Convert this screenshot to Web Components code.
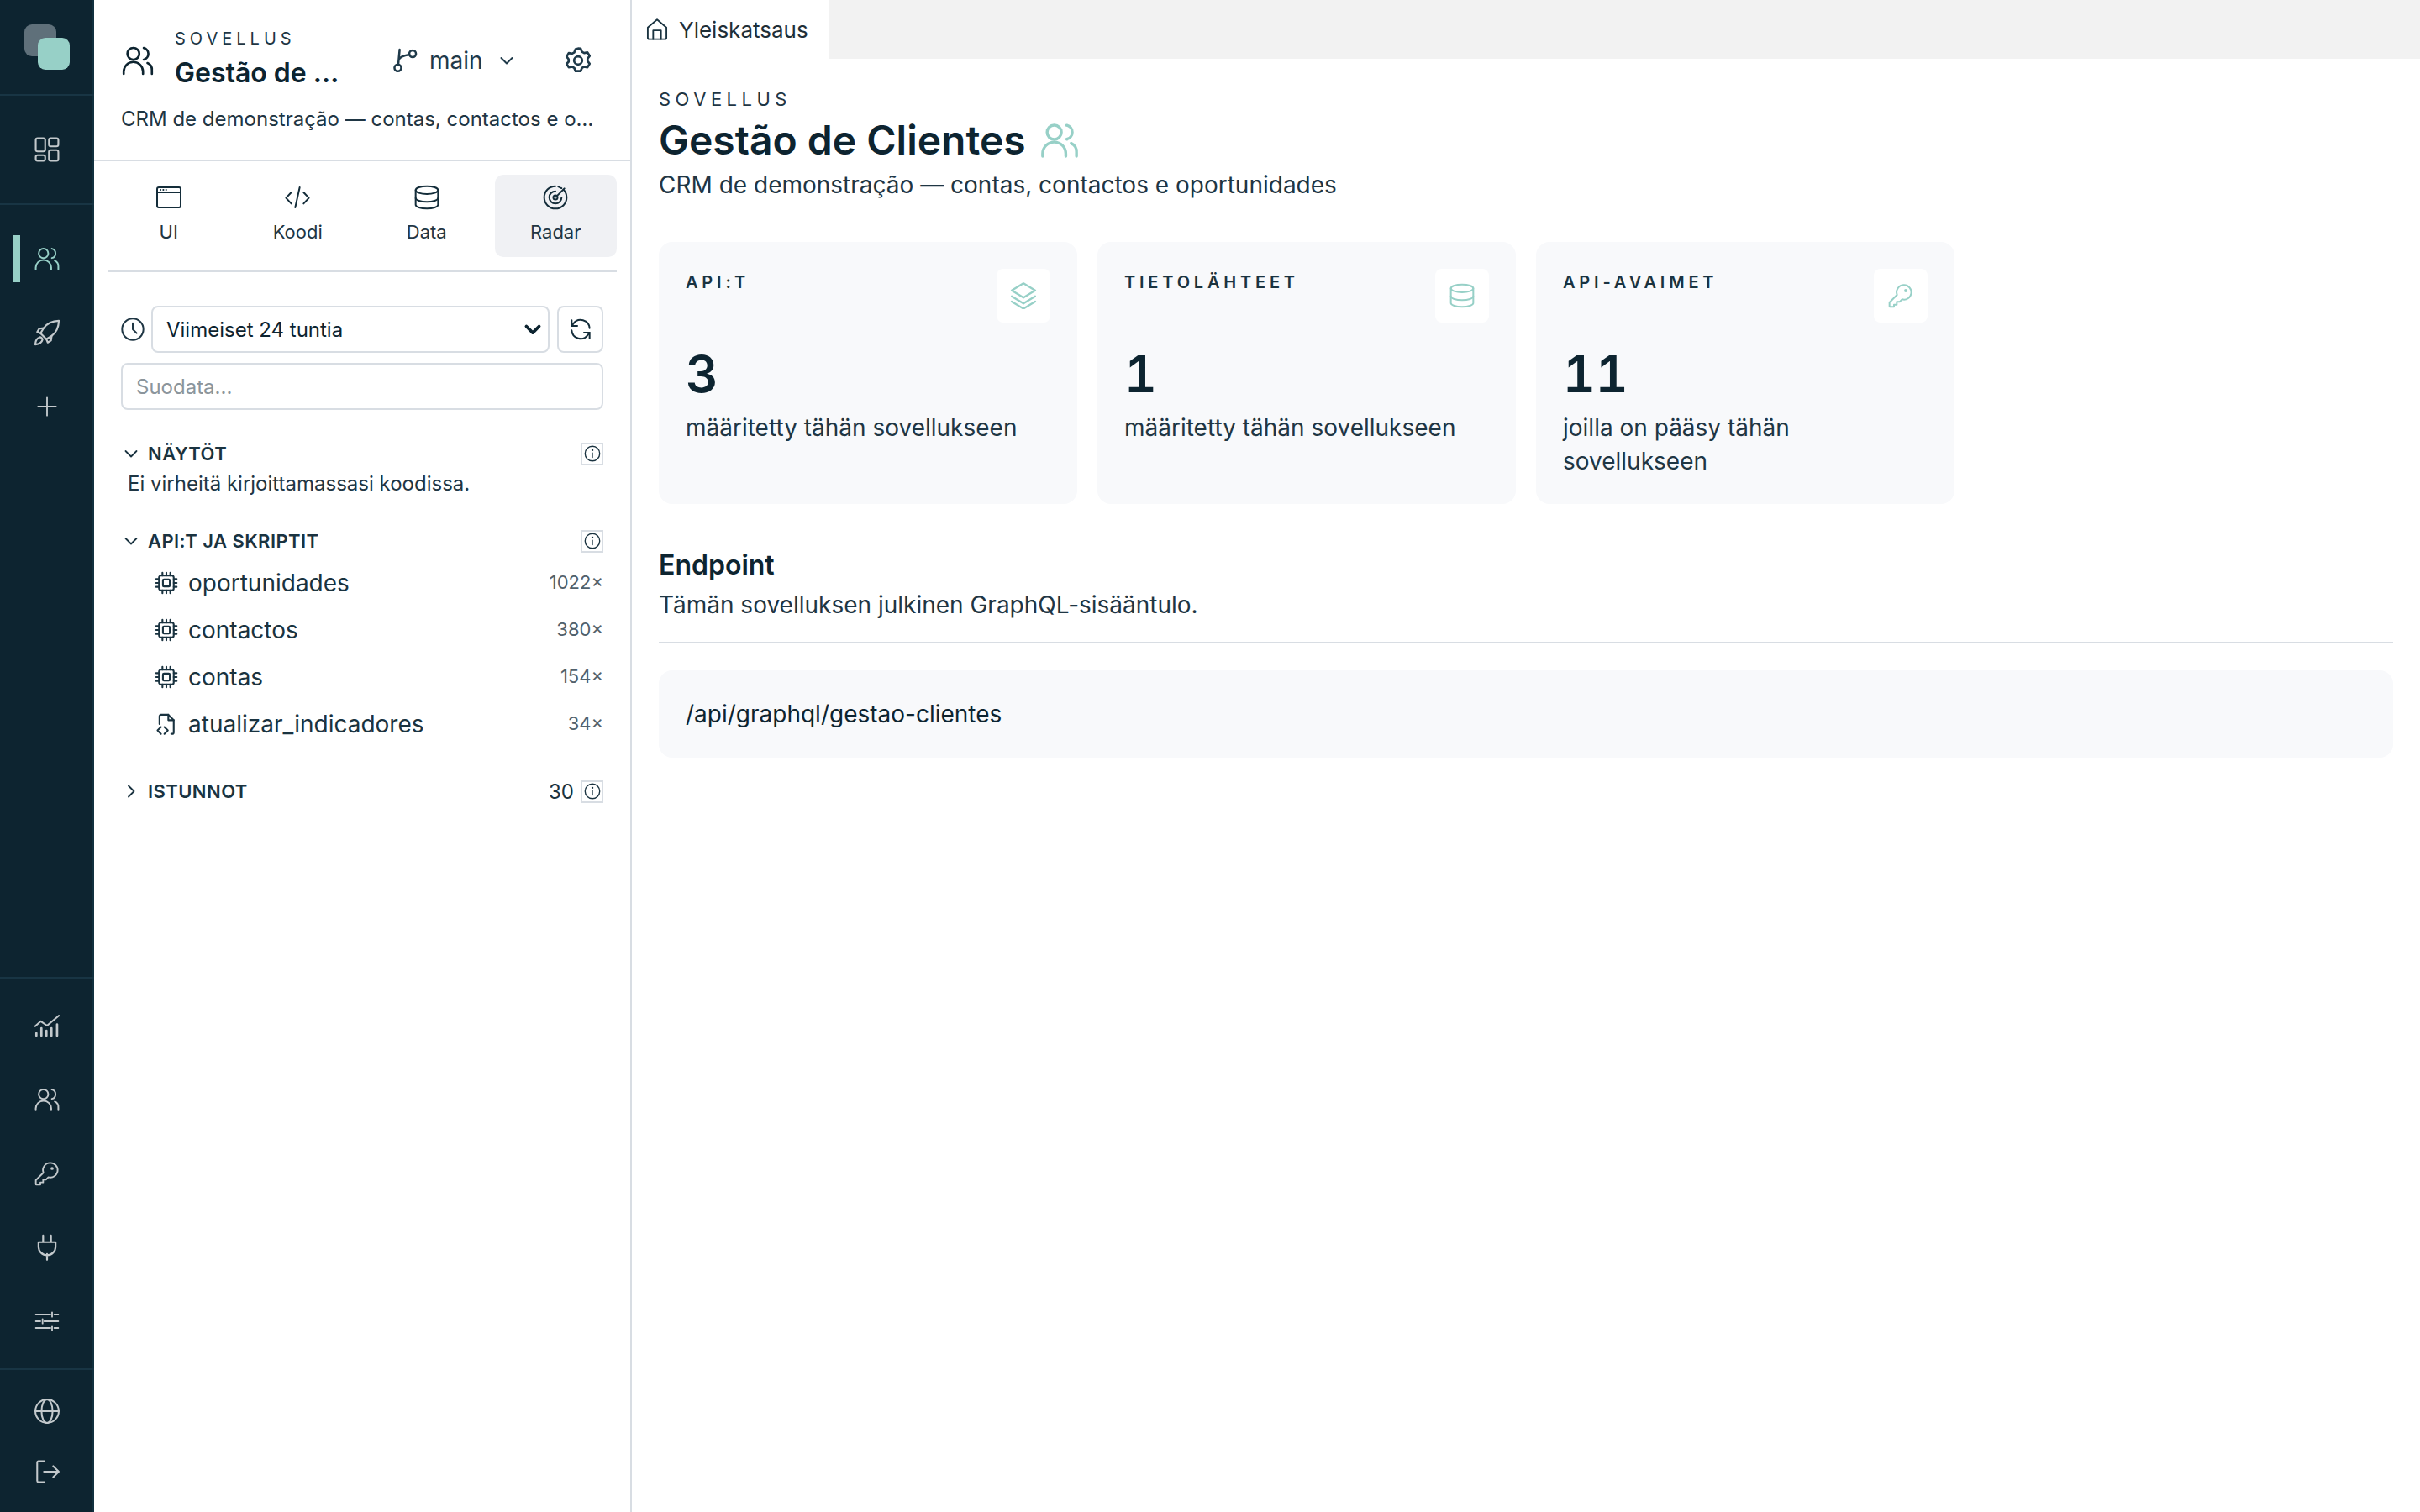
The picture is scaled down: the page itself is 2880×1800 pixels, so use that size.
<!DOCTYPE html>
<html lang="fi"><head><meta charset="utf-8"><title>Gestão de Clientes</title>
<style>
html,body{margin:0;height:100%;background:#fff}
body{font-family:Inter,"Noto Sans",sans-serif;color:#0d2430;overflow:hidden}
</style></head>
<body>
<app-shell>
  <app-rail slot="rail"></app-rail>
  <side-panel slot="panel"></side-panel>
  <main-view slot="main"></main-view>
</app-shell>
<script>
const S=(k,p)=>`<g transform="translate(12 12) scale(${k}) translate(-12 -12)">${p}</g>`;
const ICONS={
users:S(1.06,'<circle cx="9" cy="7.5" r="4"/><path d="M16 3.600a4 4 0 0 1 0 7.800"/><path d="M2.500 21v-1.500A6.500 6.500 0 0 1 9 13h0a6.500 6.500 0 0 1 6.500 6.500V21"/><path d="M18.500 13.700a5 5 0 0 1 3 5V21"/>'),
dash:S(1.12,'<rect x="3" y="3" width="7.500" height="10.500" rx="1.500"/><rect x="13.500" y="3" width="7.500" height="6.500" rx="1.500"/><rect x="3" y="16.500" width="7.500" height="4.500" rx="1.500"/><rect x="13.500" y="12.500" width="7.500" height="8.500" rx="1.500"/>'),
rocket:S(1.17,'<path d="M21 3c-5 .2-9 2-11.500 5.500L7 12.500l4.500 4.500 4-2.500C19 12 20.800 8 21 3z"/><path d="M9.500 8.500 6 9 4.500 11.500 7 12.500"/><path d="M15.500 14.500 15 18l-2.500 1.500-1-2.500"/><path d="M6.500 15.500c-2 .5-3.300 2.500-3.500 5.500 3-.2 5-1.500 5.500-3.500a2 2 0 0 0-2-2z"/>'),
plus:'<path d="M12 4v16M4 12h16"/>',
chart:S(1.12,'<path d="M2.500 12.500 7 8.500l5 3.500 9.500-8"/><path d="M3.500 20v-2M7.500 20v-6M11.500 20v-4M15.500 20v-6M20 20v-9" stroke-width="1.800"/>'),
key:'<path d="M15 2.500a6.500 6.500 0 1 1-1.800 12.750L11 17.500H8.500V20H6v2H2.500a.5.5 0 0 1-.5-.5V18l6.750-6.750A6.500 6.500 0 0 1 15 2.500z"/><circle cx="16.500" cy="7.500" r=".7" fill="currentColor"/>',
plug:S(1.17,'<path d="M9 3v5M15 3v5M5.500 8h13v3.500a5.500 5.500 0 0 1-13 0zM12 17v4.500"/>'),
sliders:'<path d="M2 6h13M18.500 6H22M2 12h4M9.500 12H22M2 18h13M18.500 18H22"/><path d="M16.500 4v4M8 10v4M16.500 16v4"/>',
globe:S(1.1,'<circle cx="12" cy="12" r="9.500"/><ellipse cx="12" cy="12" rx="4.500" ry="9.500"/><path d="M2.500 12h19"/>'),
logout:S(1.1,'<path d="M10 3.500H5a1 1 0 0 0-1 1v15a1 1 0 0 0 1 1h5"/><path d="M9.500 12h12M17 7.500l4.500 4.500-4.500 4.500"/>'),
branch:'<circle cx="5.600" cy="18.500" r="3"/><circle cx="18.800" cy="6" r="3"/><path d="M7.200 2.300 6 15.500M6.400 11.500c.7-2.700 4-3.700 9.500-4.700"/>',
down:'<path d="m5.500 9 6.500 6.500L18.500 9"/>',
right:'<path d="m9 5.500 6.500 6.500L9 18.500"/>',
gear:S(1.13,'<path d="M12 2.500l2 .1 1 2.500 1.800 1 2.600-.5 1.700 2.800-1.600 2.100v2l1.600 2.100-1.700 2.800-2.600-.5-1.800 1-1 2.500h-4l-1-2.500-1.800-1-2.600.5-1.700-2.800L4.500 13v-2L2.900 8.900l1.700-2.800 2.600.5 1.800-1 1-2.500z"/><circle cx="12" cy="12" r="3.200"/>'),
browser:'<rect x="1.500" y="3" width="21" height="18" rx="1.500"/><path d="M1.500 7.500h21"/><path d="M4.500 5.300h.1M7 5.300h.1M9.500 5.300h.1"/>',
code:'<path d="M6.500 7.500 1.800 12.500l4.700 5M17.500 7.500l4.700 5-4.700 5M14 3 10 21"/>',
db:'<ellipse cx="12" cy="5.500" rx="10" ry="3.500"/><path d="M2 5.500v13c0 1.900 4.500 3.500 10 3.500s10-1.600 10-3.500v-13"/><path d="M2 12.500c0 1.900 4.500 3.500 10 3.500s10-1.600 10-3.500"/>',
radar:'<path d="M12 2a10 10 0 1 0 10 10c0-2.500-1-5-2.800-7"/><path d="M12 6.500a5.500 5.500 0 1 0 5.500 5.500"/><path d="M14.500 2.400l3 1.400" stroke-dasharray="1.200 1.500"/><path d="M20 4 12.500 11.500"/><circle cx="12" cy="12" r="1.900"/>',
clock:'<circle cx="12" cy="12" r="9.500"/><path d="M12 6.500V12l3.500 3.500"/>',
refresh:'<path d="M20 11A8 8 0 0 0 5.500 7L4 9M4 13a8 8 0 0 0 14.500 4l1.500-2"/><path d="M4 4v5h5M20 20v-5h-5"/>',
info:'<circle cx="12" cy="12" r="9.500"/><path d="M12 11v6"/><path d="M12 7.500h.1" stroke-width="2.500"/>',
chip:'<rect x="4.500" y="4.500" width="15" height="15" rx="2"/><rect x="8.500" y="8.500" width="7" height="7" rx="1"/><path d="M8 1.500v3M12 1.500v3M16 1.500v3M8 19.500v3M12 19.500v3M16 19.500v3M1.500 8h3M1.500 12h3M1.500 16h3M19.500 8h3M19.500 12h3M19.500 16h3"/>',
file:'<path d="M5 12V4a1.500 1.500 0 0 1 1.500-1.500H14l5.500 5.500v12.500A1.500 1.500 0 0 1 18 22h-1"/><path d="M14 2.500V8h5.500"/><path d="m6.500 15-3.500 3.500L6.500 22M10 15l3.500 3.500L10 22"/>',
home:'<path d="M2.500 10 12 2 21.500 10v10.500a1.500 1.500 0 0 1-1.500 1.500H4a1.500 1.500 0 0 1-1.500-1.500z"/><path d="M8 22v-9h8v9"/>',
layers:S(1.16,'<path d="M12 2.500 21 8l-9 5.500L3 8z"/><path d="m3 12.500 9 5.500 9-5.500"/><path d="m3 16.500 9 5.500 9-5.500"/>')
};
class AppIcon extends HTMLElement{
  connectedCallback(){
    if(this.shadowRoot)return;
    const s=this.getAttribute('size')||28,w=this.getAttribute('sw')||1.5;
    this.attachShadow({mode:'open'}).innerHTML=`<style>:host{display:inline-flex;flex:none;width:${s}px;height:${s}px}svg{display:block;width:100%;height:100%;fill:none;stroke:currentColor;stroke-linecap:round;stroke-linejoin:round}</style><svg viewBox="0 0 24 24" stroke-width="${w}">${ICONS[this.getAttribute('name')]||''}</svg>`;
  }
}
customElements.define('app-icon',AppIcon);

function def(tag,html){
  customElements.define(tag,class extends HTMLElement{
    constructor(){super();this.attachShadow({mode:'open'}).innerHTML=typeof html==='function'?'':html;}
    connectedCallback(){ if(typeof html==='function')this.shadowRoot.innerHTML=html(this); }
  });
}

def('app-shell',`<style>:host{display:flex;width:100%;height:100vh}
.r{flex:none;width:112px}.p{flex:none;width:640px}.m{flex:1;min-width:0}</style>
<div class="r"><slot name="rail"></slot></div><div class="p"><slot name="panel"></slot></div><div class="m"><slot name="main"></slot></div>`);

def('rail-item',h=>`<style>:host{display:flex;align-items:center;justify-content:center;height:${h.getAttribute('h')||88}px;color:${h.hasAttribute('active')?'#97d0c7':'#c3c9cc'};position:relative}
.bar{position:absolute;left:16px;top:16px;width:8px;height:56px;background:#97d0c7}</style>
${h.hasAttribute('active')?'<span class="bar"></span>':''}<app-icon name="${h.getAttribute('icon')}" size="${h.getAttribute('size')||32}" sw="1.400"></app-icon>`);

def('app-rail',`<style>:host{display:flex;flex-direction:column;height:100vh;background:#0d2430;box-shadow:inset -2px 0 0 #11303e;box-sizing:border-box;width:112px}
.logo{height:112px;flex:none;border-bottom:2px solid #183544;position:relative}
.a,.b{position:absolute;width:38px;height:38px;border-radius:9px}
.a{left:29px;top:29px;background:#5f707a}.b{left:45px;top:45px;background:#97d0c7}
.dash{height:128px;flex:none;border-bottom:2px solid #183544;display:flex;flex-direction:column;justify-content:center}
.nav{flex:1;padding-top:20px}
.bot{flex:none;border-top:2px solid #183544;padding:12px 0}
.end{flex:none;border-top:2px solid #183544;padding:13px 0 12px}
</style>
<div class="logo"><span class="a"></span><span class="b"></span></div>
<div class="dash"><rail-item icon="dash"></rail-item></div>
<div class="nav"><rail-item icon="users" active></rail-item><rail-item icon="rocket"></rail-item><rail-item icon="plus"></rail-item></div>
<div class="bot"><rail-item icon="chart"></rail-item><rail-item icon="users"></rail-item><rail-item icon="key"></rail-item><rail-item icon="plug"></rail-item><rail-item icon="sliders"></rail-item></div>
<div class="end"><rail-item icon="globe" h="72"></rail-item><rail-item icon="logout" h="72"></rail-item></div>`);

def('panel-head',`<style>:host{display:block;padding:28px 32px 30px;border-bottom:2px solid #d8dde3;height:132px}
.row{display:flex;align-items:center;height:88px}
.ti{width:206px;margin-left:24px;min-width:0}
.eb{font-size:20px;line-height:24px;letter-spacing:.25em;color:#1f3644;margin-bottom:9px;margin-top:-3px}
.nm{font-size:32px;line-height:40px;font-weight:600;white-space:nowrap;overflow:hidden;text-overflow:ellipsis}
.br{display:flex;align-items:center;margin-left:52px;color:#1f3a4a;font-size:28px;gap:13px}
.br span{margin-top:-1px}
.ch{margin-left:3px}
.g{margin-left:57px;color:#1f3a4a}
.d{font-size:24px;line-height:36px;height:36px;margin-top:8px;white-space:nowrap;overflow:hidden;text-overflow:ellipsis;color:#1f3644;width:566px}
</style>
<div class="row"><app-icon name="users" size="40" sw="1.500"></app-icon>
<div class="ti"><div class="eb">SOVELLUS</div><div class="nm">Gestão de Clientes</div></div>
<div class="br"><app-icon name="branch" size="32" sw="1.900"></app-icon><span>main</span><app-icon class="ch" name="down" size="24" sw="2"></app-icon></div>
<app-icon class="g" name="gear" size="32" sw="1.800"></app-icon></div>
<div class="d">CRM de demonstração — contas, contactos e oportunidades</div>`);

def('tool-tab',h=>`<style>:host{display:flex;flex:1;flex-direction:column;align-items:center;justify-content:center;height:98px;border-radius:10px;font-size:22px;line-height:32px;color:#1f3644;background:${h.hasAttribute('active')?'#f0f1f4':'transparent'}}
app-icon{margin-top:-3px;color:#142d3a}
span{margin-top:9px}</style><app-icon name="${h.getAttribute('icon')}" size="32" sw="1.500"></app-icon><span><slot></slot></span>`);

def('tool-tabs',`<style>:host{display:flex;gap:8px;margin:0 16px;padding:16px 0;border-bottom:2px solid #d8dde3}</style>
<tool-tab icon="browser">UI</tool-tab><tool-tab icon="code">Koodi</tool-tab><tool-tab icon="db">Data</tool-tab><tool-tab icon="radar" active>Radar</tool-tab>`);

def('radar-filter',`<style>:host{display:block;padding:40px 32px 0 32px}
.r{display:flex;align-items:center;gap:9px;height:56px;color:#1f3644}
.r>app-icon{margin:0 -3px 0 -2px}
.sel{flex:1;min-width:0;position:relative;height:56px}
.sel app-icon{position:absolute;right:6px;top:14px;color:#0d2430;pointer-events:none}
select{appearance:none;-webkit-appearance:none;display:block;width:100%;height:56px;font:24px Inter,sans-serif;color:#0d2430;border:2px solid #d8dde3;border-radius:8px;background:#fff;box-sizing:border-box;outline:none;padding:0 32px 0 16px;margin:0}
input{font:24px Inter,sans-serif;color:#0d2430;border:2px solid #d8dde3;border-radius:8px;background:#fff;box-sizing:border-box;height:56px;outline:none;display:block;width:100%;margin-top:12px;padding:0 16px}
button{flex:none;width:55px;height:56px;border:2px solid #d8dde3;border-radius:8px;background:#fff;padding:0;display:flex;align-items:center;justify-content:center;color:#142d3a;margin:0}
input::placeholder{color:#8b959c}
</style>
<div class="r"><app-icon name="clock" size="32" sw="1.500"></app-icon><div class="sel"><select><option>Viimeiset 24 tuntia</option></select><app-icon name="down" size="28" sw="3.200"></app-icon></div><button><app-icon name="refresh" size="32" sw="1.500"></app-icon></button></div>
<input placeholder="Suodata...">`);

def('radar-section',h=>`<style>:host{display:block;margin-top:38px}
.h{display:flex;align-items:center;height:28px;gap:8px;font-size:22px;font-weight:600;letter-spacing:.02em;color:#1a3340}
.t{flex:1}
.n{font-weight:400;letter-spacing:0;font-size:24px;margin-right:0}
.i{box-sizing:border-box;width:27px;height:27px;border:2px solid #d8dde3;display:flex;align-items:center;justify-content:center}
</style><div class="h"><app-icon name="${h.hasAttribute('closed')?'right':'down'}" size="24" sw="1.800"></app-icon><span class="t">${h.getAttribute('label')}</span>${h.getAttribute('count')?`<span class="n">${h.getAttribute('count')}</span>`:''}<span class="i"><app-icon name="info" size="22" sw="1.500"></app-icon></span></div><slot></slot>`);

def('radar-item',h=>`<style>:host{display:flex;align-items:center;height:56px;padding-left:40px;gap:12px;font-size:28px;color:#1a3340}
.t{flex:1}.c{font-size:22px;color:#51616c;margin-top:-2px}</style>
<app-icon name="${h.getAttribute('icon')}" size="28" sw="1.800"></app-icon><span class="t"><slot></slot></span><span class="c">${h.getAttribute('count')}</span>`);

def('radar-note',`<style>:host{display:block;font-size:24px;line-height:32px;margin-top:6px;padding-left:8px;color:#1f3644}</style><slot></slot>`);

def('side-panel',`<style>:host{display:block;box-sizing:border-box;width:640px;height:100vh;border-right:2px solid #d8dde3;overflow:hidden}
.b{padding:0 32px}</style>
<panel-head></panel-head><tool-tabs></tool-tabs><radar-filter></radar-filter>
<div class="b">
<radar-section label="NÄYTÖT"><radar-note>Ei virheitä kirjoittamassasi koodissa.</radar-note></radar-section>
<radar-section label="API:T JA SKRIPTIT"><div style="height:8px"></div>
<radar-item icon="chip" count="1022×">oportunidades</radar-item>
<radar-item icon="chip" count="380×">contactos</radar-item>
<radar-item icon="chip" count="154×">contas</radar-item>
<radar-item icon="file" count="34×">atualizar_indicadores</radar-item>
</radar-section>
<radar-section label="ISTUNNOT" count="30" closed></radar-section>
</div>`);

def('stat-card',h=>`<style>:host{display:block;background:#f8f9fb;border-radius:16px;padding:32px;box-sizing:border-box;height:312px}
.t{display:flex;justify-content:space-between;align-items:flex-start}
.l{font-size:20px;line-height:32px;font-weight:600;letter-spacing:.24em;color:#1a3340}
.b{width:64px;height:64px;background:#fff;border-radius:8px;display:flex;align-items:center;justify-content:center;color:#97d0c7}
.n{font-size:60px;line-height:72px;font-weight:600;margin-top:25px;color:#0d2430;font-variant-numeric:tabular-nums}
.d{font-size:28px;line-height:40px;margin-top:8px;color:#1f3644;max-width:340px}
.w{max-width:none}
</style><div class="t"><span class="l">${h.getAttribute('label')}</span><span class="b"><app-icon name="${h.getAttribute('icon')}" size="32" sw="1.500"></app-icon></span></div>
<div class="n">${h.getAttribute('value')}</div><div class="d ${h.hasAttribute('wide')?'w':''}"><slot></slot></div>`);

def('top-tabs',`<style>:host{display:flex;height:70px;background:#f2f2f2}
.t{display:flex;align-items:center;gap:12px;padding:0 24px 0 16px;background:#fff;font-size:26px;color:#1f2f38}
app-icon{color:#1a3340}</style><div class="t"><app-icon name="home" size="28" sw="1.600"></app-icon><span>Yleiskatsaus</span></div>`);

def('main-view',`<style>:host{display:block;height:100vh;overflow:hidden}
.c{padding:34px 32px 0 32px}
.eb{font-size:22px;line-height:28px;letter-spacing:.25em;color:#1f3644}
h1{margin:5px 0 0;font-size:48px;line-height:60px;font-weight:600;display:flex;align-items:center;gap:16px;color:#0d2430}
h1 app-icon{color:#97d0c7}
.s{font-size:28px;line-height:40px;margin-top:3px;color:#1f3644}
.g{display:grid;grid-template-columns:repeat(3,498px);gap:24px;margin-top:48px}
h2{font-size:32px;line-height:40px;font-weight:600;margin:53px 0 0;color:#0d2430}
.e{font-size:28px;line-height:40px;margin-top:7px;color:#1f3644}
.hr{height:2px;background:#d8dde3;margin:24px 0 32px}
.code{background:#f8f9fb;border-radius:16px;padding:32px;font-size:28px;line-height:40px;color:#0d2430}
</style>
<top-tabs></top-tabs>
<div class="c">
<div class="eb">SOVELLUS</div>
<h1><span>Gestão de Clientes</span><app-icon name="users" size="48" sw="1.600"></app-icon></h1>
<div class="s">CRM de demonstração — contas, contactos e oportunidades</div>
<div class="g">
<stat-card label="API:T" icon="layers" value="3" wide>määritetty tähän sovellukseen</stat-card>
<stat-card label="TIETOLÄHTEET" icon="db" value="1" wide>määritetty tähän sovellukseen</stat-card>
<stat-card label="API-AVAIMET" icon="key" value="11">joilla on pääsy tähän sovellukseen</stat-card>
</div>
<h2>Endpoint</h2>
<div class="e">Tämän sovelluksen julkinen GraphQL-sisääntulo.</div>
<div class="hr"></div>
<div class="code">/api/graphql/gestao-clientes</div>
</div>`);
</script>
</body></html>
